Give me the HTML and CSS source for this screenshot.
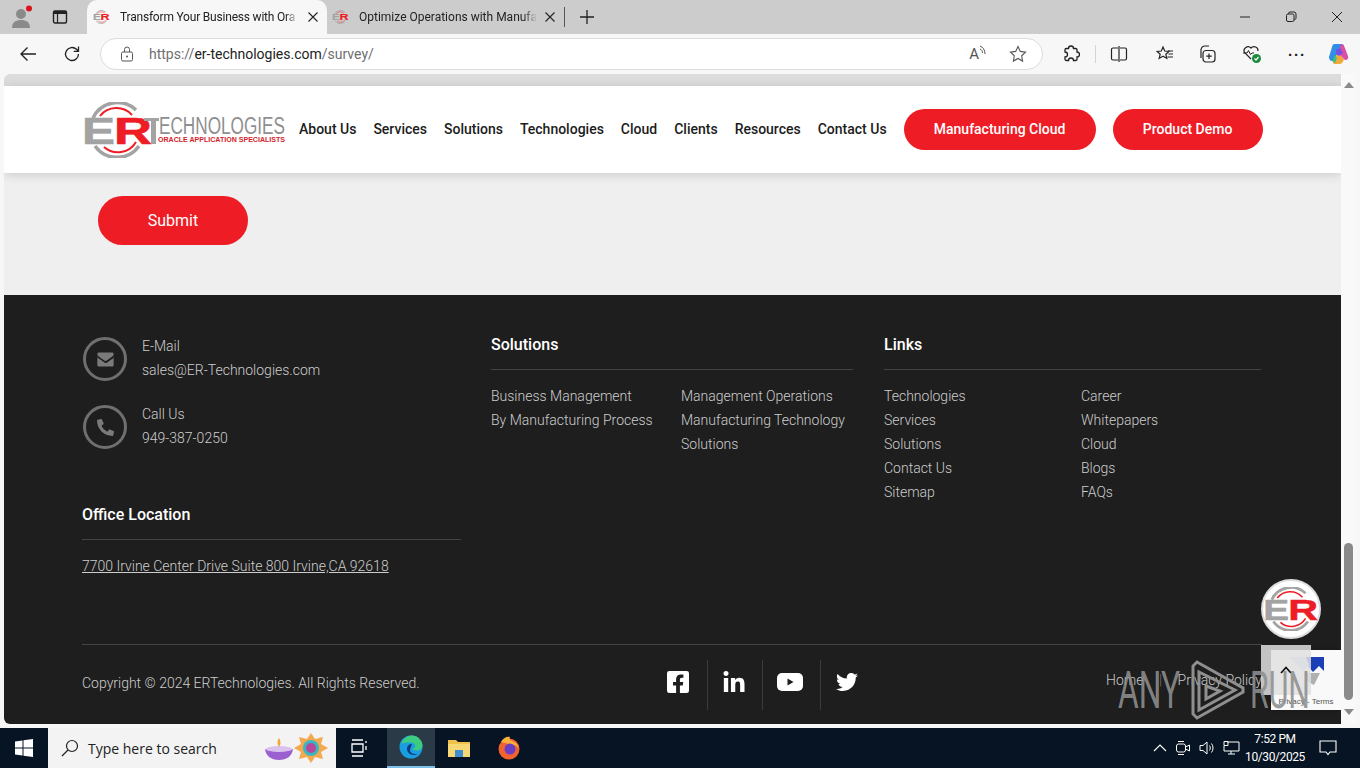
FILE: index.html

```html
<!DOCTYPE html>
<html lang="en">
<head>
    <meta charset="UTF-8">
    <meta name="viewport" content="width=device-width, initial-scale=1.0">
    <title>Survey - ER Technologies</title>
    <link rel="stylesheet" href="styles.css">
</head>
<body>
    <svg class="defs" width="0" height="0">
        <defs>
            <symbol id="emblem" viewBox="-2 0 76 56">
                <path d="M9 16A27 27 0 0 1 52 8" fill="none" stroke="#a3a3a3" stroke-width="3.5"/>
                <path d="M16 14A21 21 0 0 1 48 13" fill="none" stroke="#ee1c25" stroke-width="2"/>
                <path d="M11 44A27 27 0 0 0 55 44" fill="none" stroke="#a3a3a3" stroke-width="3.5"/>
                <path d="M20 45A21 21 0 0 0 52 40" fill="none" stroke="#ee1c25" stroke-width="2"/>
                <text class="emblem-e" x="-2" y="42" textLength="33" lengthAdjust="spacingAndGlyphs">E</text>
                <text class="emblem-r" x="30" y="42" textLength="38" lengthAdjust="spacingAndGlyphs">R</text>
            </symbol>
        </defs>
    </svg>

    <div class="tabstrip">
        <div class="profile">
            <svg width="24" height="24" viewBox="0 0 24 24"><circle cx="11" cy="9" r="5" fill="#8a8a8a"/><path d="M2 23c0-6 4-8 9-8s9 2 9 8z" fill="#8a8a8a"/><circle cx="19" cy="3.5" r="3" fill="#d9141e"/></svg>
        </div>
        <div class="strip-btn">
            <svg width="16" height="16" viewBox="0 0 16 16"><rect x="1.5" y="2" width="13" height="12" rx="1.5" fill="none" stroke="#222" stroke-width="1.4"/><rect x="1.5" y="2" width="13" height="3" fill="#222"/><path d="M5.5 5v9" stroke="#222" stroke-width="1.2"/></svg>
        </div>
        <div class="tab tab-active">
            <svg class="favicon" width="18" height="14"><use href="#emblem"/></svg>
            <span class="tab-title">Transform Your Business with Ora</span>
            <span class="tab-close"><svg width="10" height="10" viewBox="0 0 10 10"><path d="M.5.5l9 9M9.500.5l-9 9" stroke="#222" stroke-width="1.100"/></svg></span>
        </div>
        <div class="tab">
            <svg class="favicon" width="18" height="14"><use href="#emblem"/></svg>
            <span class="tab-title">Optimize Operations with Manufa</span>
            <span class="tab-close"><svg width="10" height="10" viewBox="0 0 10 10"><path d="M.5.5l9 9M9.500.5l-9 9" stroke="#222" stroke-width="1.100"/></svg></span>
        </div>
        <div class="tab-sep"></div>
        <div class="new-tab">
            <svg width="16" height="16" viewBox="0 0 16 16"><path d="M8 1v14M1 8h14" stroke="#222" stroke-width="1.3"/></svg>
        </div>
        <div class="window-btns">
            <svg width="12" height="12" viewBox="0 0 12 12"><path d="M1 6h10" stroke="#222" stroke-width="1"/></svg>
            <svg width="12" height="12" viewBox="0 0 12 12"><rect x="1.5" y="3" width="7.5" height="7.5" rx="1.5" fill="none" stroke="#222"/><path d="M3.5 3V2.5a1.5 1.5 0 0 1 1.5-1.5h4a2 2 0 0 1 2 2v4A1.5 1.5 0 0 1 9 8.500" fill="none" stroke="#222"/></svg>
            <svg width="12" height="12" viewBox="0 0 12 12"><path d="M1 1l10 10M11 1L1 11" stroke="#222" stroke-width="1"/></svg>
        </div>
    </div>

    <div class="toolbar">
        <svg class="nav-icon" width="18" height="18" viewBox="0 0 18 18"><path d="M17 9H2M8.500 2.500L2 9l6.500 6.500" fill="none" stroke="#222" stroke-width="1.4"/></svg>
        <svg class="nav-icon" width="18" height="18" viewBox="0 0 18 18"><path d="M15.500 9a6.500 6.500 0 1 1-2-4.700L15.500 6.300M15.500 1.500v4.800h-4.800" fill="none" stroke="#222" stroke-width="1.3"/></svg>
        <div class="address">
            <svg class="lock" width="14" height="16" viewBox="0 0 14 16"><rect x="1.500" y="6" width="11" height="9" rx="1.500" fill="none" stroke="#555"/><path d="M4.500 6V3.500a2.500 2.500 0 0 1 5 0V6" fill="none" stroke="#555"/><circle cx="7" cy="10.500" r="1" fill="#555"/></svg>
            <span class="url"><span class="url-dim">https://</span>er-technologies.com<span class="url-dim">/survey/</span></span>
            <span class="read-aloud">A<svg width="8" height="10" viewBox="0 0 8 10"><path d="M1 1c3 1 5 4 5 8M1 4c1.500.5 2.500 2 2.500 4" fill="none" stroke="#555"/></svg></span>
            <svg width="18" height="18" viewBox="0 0 18 18"><path d="M9 1.500l2.300 4.900 5.200.7-3.800 3.700.9 5.300L9 13.500l-4.600 2.600.9-5.300L1.500 7.100l5.200-.7z" fill="none" stroke="#555" stroke-width="1.100"/></svg>
        </div>
        <div class="tools">
            <svg class="tool" width="18" height="18" viewBox="0 0 18 18"><path d="M6.500 3.500a2.500 2.500 0 0 1 5 0h2.200c.7 0 1.300.6 1.300 1.300V7a2.500 2.500 0 0 1 0 5v2.200c0 .7-.6 1.300-1.300 1.300H11.500a2.500 2.500 0 0 0-5 0H4.300c-.7 0-1.300-.6-1.300-1.300V12a2.500 2.500 0 0 0 0-5V4.800c0-.7.6-1.300 1.300-1.300z" fill="none" stroke="#222" stroke-width="1.300"/></svg>
            <span class="tool-sep"></span>
            <svg class="tool" width="18" height="18" viewBox="0 0 18 18"><path d="M8 3H3a1.500 1.500 0 0 0-1.500 1.500v9A1.500 1.500 0 0 0 3 15h5M10 3h5a1.500 1.500 0 0 1 1.500 1.500v9A1.500 1.500 0 0 1 15 15h-5M9 1v16" fill="none" stroke="#222" stroke-width="1.200"/></svg>
            <svg class="tool tool-fav" width="18" height="18" viewBox="0 0 18 18"><path d="M7 2l1.700 4 4.300.4-3.200 2.800 1 4.200L7 11.200l-3.800 2.200 1-4.200L1 6.400 5.300 6zM12 6h5M12.500 9h4.500M11.500 12H17" fill="none" stroke="#222" stroke-width="1.200"/></svg>
            <svg class="tool" width="18" height="18" viewBox="0 0 18 18"><rect x="5" y="5.500" width="12" height="11.500" rx="3" fill="none" stroke="#222" stroke-width="1.200"/><path d="M11 8.500v5.500M8.300 11.200h5.400M3 13V5a4 4 0 0 1 4-4h4" fill="none" stroke="#222" stroke-width="1.200"/></svg>
            <svg class="tool tool-health" width="20" height="20" viewBox="0 0 20 20"><path d="M9 15L2.500 8.500a4 4 0 0 1 6.500-4.500 4 4 0 0 1 7 3" fill="none" stroke="#222" stroke-width="1.200"/><path d="M1 9h4l1.500-2.500 2 4L10 9h2" fill="none" stroke="#222"/><circle cx="14.500" cy="14.500" r="4.500" fill="#1a8a3c"/><path d="M12.500 14.500l1.500 1.500 2.500-3" fill="none" stroke="#fff" stroke-width="1.200"/></svg>
            <span class="more">&middot;&middot;&middot;</span>
            <svg class="tool" width="22" height="22" viewBox="0 0 22 22">
                <path d="M7 1h6c2 0 3 1 3 3l-6 6-5 8H4c-2 0-3-2-3-4l3-10c.5-2 1-3 3-3z" fill="#2f8fe6"/>
                <path d="M5 18l5-8 6 6c-1 3-2 5-5 5H7c-2 0-2-1-2-3z" fill="#f2a93b"/>
                <path d="M13 1c2 0 3 1 3.500 3l3.500 9c.5 2 0 4-3 4l-7-7z" fill="#d94fa8"/>
                <path d="M8 7l4-2 3 5-4 3-3-2z" fill="#7a4fe0"/>
                <path d="M4 18l3-6 2 3-2 5z" fill="#3fbf7f"/>
            </svg>
        </div>
    </div>

    <div class="viewport">
        <div class="page">
            <div class="page-top"></div>
            <header class="site-header">
                <a class="logo">
                    <svg width="203" height="56" viewBox="0 0 203 56">
                        <use href="#emblem" width="76" height="56"/>
                        <path d="M62 16h15v3h-3v23h-5V19H62z" fill="#a3a3a3"/>
                        <text class="logo-name" x="77" y="32" textLength="126" lengthAdjust="spacingAndGlyphs">ECHNOLOGIES</text>
                        <text class="logo-tag" x="76" y="40" textLength="127" lengthAdjust="spacingAndGlyphs">ORACLE APPLICATION SPECIALISTS</text>
                    </svg>
                </a>
                <nav class="main-nav">
                    <a>About Us</a>
                    <a>Services</a>
                    <a>Solutions</a>
                    <a>Technologies</a>
                    <a>Cloud</a>
                    <a>Clients</a>
                    <a>Resources</a>
                    <a>Contact Us</a>
                    <a class="btn-red btn-cloud">Manufacturing Cloud</a>
                    <a class="btn-red btn-demo">Product Demo</a>
                </nav>
            </header>

            <main class="survey">
                <button class="btn-submit">Submit</button>
            </main>

            <footer class="site-footer">
                <div class="footer-cols">
                    <div class="col-contact">
                        <div class="contact-item">
                            <span class="contact-icon">
                                <svg width="17" height="17" viewBox="0 0 512 512"><path fill="#7a7a7a" d="M502 191v227c0 26-21 46-47 46H57c-26 0-47-20-47-46V191c9 9 19 17 31 25 53 36 114 77 162 112 21 15 47 33 63 33s42-18 63-33c48-35 109-76 162-112 12-8 22-16 31-25zM455 48c26 0 47 21 47 47 0 28-20 53-40 68-63 44-126 87-176 123-12 9-22 17-30 17s-18-8-30-17c-50-36-113-79-176-123-20-15-40-40-40-68 0-26 21-47 47-47z"/></svg>
                            </span>
                            <div>E-Mail<br>sales@ER-Technologies.com</div>
                        </div>
                        <div class="contact-item">
                            <span class="contact-icon">
                                <svg width="17" height="17" viewBox="0 0 512 512"><path fill="#7a7a7a" d="M497.39 361.8l-112-48a24 24 0 0 0-28 6.9l-49.6 60.6A370.66 370.66 0 0 1 130.6 204.11l60.6-49.6a23.94 23.94 0 0 0 6.9-28l-48-112A24.16 24.16 0 0 0 122.6.61l-104 24A24 24 0 0 0 0 48c0 256.5 207.9 464 464 464a24 24 0 0 0 23.4-18.6l24-104a24.29 24.29 0 0 0-14.01-27.6z"/></svg>
                            </span>
                            <div>Call Us<br>949-387-0250</div>
                        </div>
                        <h4 class="footer-title office-title">Office Location</h4>
                        <a class="address-link">7700 Irvine Center Drive Suite 800 Irvine,CA 92618</a>
                    </div>

                    <div>
                        <h4 class="footer-title">Solutions</h4>
                        <div class="link-grid solutions-grid">
                            <ul>
                                <li>Business Management</li>
                                <li>By Manufacturing Process</li>
                            </ul>
                            <ul>
                                <li>Management Operations</li>
                                <li>Manufacturing Technology</li>
                                <li>Solutions</li>
                            </ul>
                        </div>
                    </div>

                    <div class="col-links">
                        <h4 class="footer-title">Links</h4>
                        <div class="link-grid links-grid">
                            <ul>
                                <li>Technologies</li>
                                <li>Services</li>
                                <li>Solutions</li>
                                <li>Contact Us</li>
                                <li>Sitemap</li>
                            </ul>
                            <ul>
                                <li>Career</li>
                                <li>Whitepapers</li>
                                <li>Cloud</li>
                                <li>Blogs</li>
                                <li>FAQs</li>
                            </ul>
                        </div>
                    </div>
                </div>

                <div class="footer-bottom">
                    <div class="copyright">Copyright &copy; 2024 ERTechnologies. All Rights Reserved.</div>
                    <div class="social">
                        <a><svg width="22" height="22" viewBox="0 32 448 448"><path fill="#fff" d="M400 32H48A48 48 0 0 0 0 80v352a48 48 0 0 0 48 48h137.25V327.69h-63V256h63v-54.64c0-62.15 37-96.48 93.67-96.48 27.14 0 55.52 4.84 55.52 4.84v61h-31.27c-30.81 0-40.42 19.12-40.42 38.73V256h68.78l-11 71.69h-57.78V480H400a48 48 0 0 0 48-48V80a48 48 0 0 0-48-48z"/></svg></a>
                        <a><svg width="22" height="21" viewBox="0 0 448 448"><path fill="#fff" d="M100.28 448H7.4V148.9h92.88zM53.79 108.1C24.09 108.1 0 83.5 0 53.8a53.79 53.79 0 0 1 107.58 0c0 29.7-24.1 54.3-53.79 54.3zM447.9 448h-92.68V302.4c0-34.7-.7-79.2-48.29-79.2-48.29 0-55.69 37.7-55.69 76.7V448h-92.78V148.9h89.08v40.8h1.3c12.4-23.5 42.69-48.3 87.88-48.3 94 0 111.28 61.9 111.28 142.3V448z"/></svg></a>
                        <a><svg width="26" height="18" viewBox="0 0 26 18"><rect width="26" height="18" rx="5" fill="#fff"/><path d="M10.500 5.500v7l6-3.500z" fill="#1e1e1e"/></svg></a>
                        <a><svg width="22" height="22" viewBox="0 0 512 512"><path fill="#fff" d="M459.37 151.716c.325 4.548.325 9.097.325 13.645 0 138.72-105.583 298.558-298.558 298.558-59.452 0-114.68-17.219-161.137-47.106 8.447.974 16.568 1.299 25.34 1.299 49.055 0 94.213-16.568 130.274-44.832-46.132-.975-84.792-31.188-98.112-72.772 6.498.974 12.995 1.624 19.818 1.624 9.421 0 18.843-1.3 27.614-3.573-48.081-9.747-84.143-51.98-84.143-102.985v-1.299c13.969 7.797 30.214 12.67 47.431 13.319-28.264-18.843-46.781-51.005-46.781-87.391 0-19.492 5.197-37.36 14.294-52.954 51.655 63.675 129.3 105.258 216.365 109.807-1.624-7.797-2.599-15.918-2.599-24.04 0-57.828 46.782-104.934 104.934-104.934 30.213 0 57.502 12.67 76.67 33.137 23.715-4.548 46.456-13.32 66.599-25.34-7.798 24.366-24.366 44.833-46.132 57.827 21.117-2.273 41.584-8.122 60.426-16.243-14.292 20.791-32.161 39.308-52.628 54.253z"/></svg></a>
                    </div>
                    <div class="legal"><span>Home</span><span class="legal-sep">|</span><span>Privacy Policy</span></div>
                </div>
            </footer>

            <!-- floating stuff over the footer -->
            <div class="chat-badge"><svg width="60" height="44"><use href="#emblem"/></svg></div>
            <div class="recaptcha">
                <svg width="36" height="36" viewBox="0 0 36 36"><path d="M18 2l10 0 0 0 8 0v14l-5-5-6 6-7-8z" fill="#1c3fb5"/><path d="M2 2h16l3 8-6 6L8 9z" fill="#c4d4f5"/><path d="M18 18h14l-6 12-8-4z" fill="#b0b0b0"/></svg>
                <span class="recaptcha-links">Privacy - Terms</span>
            </div>
            <div class="to-top">
                <svg width="12" height="8" viewBox="0 0 12 8"><path d="M1 7l5-5.500L11 7" fill="none" stroke="#111" stroke-width="1.800"/></svg>
            </div>
            <svg class="watermark" width="194" height="64" viewBox="0 0 194 64">
                <text x="0" y="50" textLength="62" lengthAdjust="spacingAndGlyphs">ANY</text>
                <path d="M75 8v48l4 4 46-26v-4L79 4zM81 14l36 18-36 20zM88 28l14 5-14 8z" fill="none" stroke="#8f8f8f" stroke-width="3"/>
                <text x="132" y="50" textLength="60" lengthAdjust="spacingAndGlyphs">RUN</text>
            </svg>
        </div>

        <div class="scrollbar">
            <span class="arrow-up"></span>
            <div class="scroll-track"><div class="scroll-thumb"></div></div>
            <span class="arrow-down"></span>
        </div>
    </div>

    <div class="taskbar">
        <div class="start">
            <svg width="18" height="18" viewBox="0 0 18 18"><path d="M0 2.500l7.500-1v7H0zM8.500 1.300L18 0v8.500H8.500zM0 9.500h7.500v7l-7.500-1zM8.500 9.500H18V18l-9.500-1.300z" fill="#fff"/></svg>
        </div>
        <div class="searchbox">
            <svg width="18" height="18" viewBox="0 0 18 18"><circle cx="11" cy="7" r="5.500" fill="none" stroke="#222" stroke-width="1.200"/><path d="M7 11l-6 6" stroke="#222" stroke-width="1.300"/></svg>
            <span class="search-text">Type here to search</span>
            <svg class="search-art" width="66" height="32" viewBox="0 0 66 32">
                <path d="M2 17c8 3 20 3 28 0-1 7-6 11-14 11S3 24 2 17z" fill="#9c5fd0"/>
                <ellipse cx="16" cy="17" rx="13" ry="3" fill="#d9c3ee"/>
                <path d="M16 6c2 3 2 6 0 9-2-3-2-6 0-9z" fill="#f3a33b"/>
                <polygon points="48,1 52,7 60,5 58,12 65,16 58,20 60,27 52,25 48,31 44,25 36,27 38,20 31,16 38,12 36,5 44,7" fill="#f4a94e"/>
                <circle cx="48" cy="16" r="8" fill="#37b7c4"/>
                <circle cx="48" cy="16" r="5" fill="#b6479c"/>
            </svg>
        </div>
        <div class="task-btn task-view">
            <svg width="18" height="18" viewBox="0 0 18 18"><path d="M1 1h11M1 17h11M1 5h11v8H1zM15 2v2M15 7v4" fill="none" stroke="#fff" stroke-width="1.300"/></svg>
        </div>
        <div class="task-btn task-edge">
            <svg width="24" height="24" viewBox="0 0 24 24">
                <circle cx="12" cy="12" r="11.500" fill="#1b9de2"/>
                <path d="M2 9C4 3 9 .5 13 .5c6 0 10.500 5 10.500 10 0 3-3 5-6 5-2 0-4-1-4-2 4 0 4-6-2-6-5 0-9 .5-9.500 1.500z" fill="#3ccb7f"/>
                <path d="M13 9c-3 0-5 2-5 5s3 6 7 6c2 0 3-.5 4-1-6 1-8-2-8-4 0-1 1-4 2-6z" fill="#0c3c7a"/>
            </svg>
        </div>
        <div class="task-btn task-files">
            <svg width="22" height="20" viewBox="0 0 22 20"><path d="M0 2h8l2 2h12v15H0z" fill="#f0c14b"/><rect y="6" width="22" height="13" fill="#f8d775"/><rect x="7" y="12" width="8" height="7" fill="#3f8fcf"/></svg>
        </div>
        <div class="task-btn task-firefox">
            <svg width="24" height="24" viewBox="0 0 24 24"><circle cx="12" cy="13" r="10.500" fill="#f2622e"/><path d="M4 6c2-4 6-6 9-5-1 2 0 3 2 4 3 1 6 3 7 8-1-2-3-4-6-4z" fill="#fbb03b"/><circle cx="13" cy="13" r="5.500" fill="#6a3fc4"/></svg>
        </div>
        <div class="tray">
            <svg width="14" height="8" viewBox="0 0 14 8"><path d="M1 7l6-6 6 6" fill="none" stroke="#fff" stroke-width="1.100"/></svg>
            <svg width="16" height="16" viewBox="0 0 16 16"><rect x="1.500" y="4" width="9" height="8" rx="2" fill="none" stroke="#fff"/><path d="M10.500 7l4-2v6l-4-2M3 1.500h6M3 14.500h6" fill="none" stroke="#fff"/></svg>
            <svg width="16" height="16" viewBox="0 0 16 16"><path d="M1 5.500h3L8 2v12l-4-3.500H1zM10.500 5.500c1 1.500 1 3.500 0 5M12.500 3.500c2 2.500 2 6.500 0 9" fill="none" stroke="#fff"/></svg>
            <svg width="17" height="16" viewBox="0 0 17 16"><path d="M4 2h12v9H1V6M8 11v3M5 14h7M1 1.500h4v4H1z" fill="none" stroke="#fff"/></svg>
            <div class="clock">7:52 PM<br>10/30/2025</div>
            <svg class="notify" width="18" height="16" viewBox="0 0 18 16"><path d="M1 1h16v11h-6l-2 2.500L7 12H1z" fill="none" stroke="#fff" stroke-width="1.100"/></svg>
        </div>
    </div>
</body>
</html>
```

FILE: styles.css

```css
* { box-sizing: border-box; }
html, body { margin: 0; height: 100%; }
body { width: 1360px; height: 768px; overflow: hidden; display: flex; flex-direction: column; font-family: Roboto, "Liberation Sans", sans-serif; background: #f7f7f7; }
a { color: inherit; text-decoration: none; }
ul { list-style: none; margin: 0; padding: 0; }
.defs { position: absolute; }
.emblem-e { font: 700 37px "Liberation Sans", sans-serif; fill: #a3a3a3; stroke: #a3a3a3; stroke-width: .6; }
.emblem-r { font: 700 37px "Liberation Sans", sans-serif; fill: #ee1c25; stroke: #ee1c25; stroke-width: .6; }

/* browser chrome */
.tabstrip { height: 34px; flex: none; background: #cccccc; display: flex; align-items: center; font-family: Roboto, "Noto Sans", sans-serif; font-size: 12px; color: #222; }
.profile { width: 44px; padding-left: 10px; display: flex; }
.strip-btn { width: 43px; padding-left: 8px; display: flex; }
.tab { width: 240px; height: 34px; display: flex; align-items: center; padding-left: 6px; }
.tab-active { background: #f7f7f7; border-radius: 10px 10px 0 0; }
.tab-active .tab-title { letter-spacing: -.2px; }
.tab + .tab { width: 238px; padding-left: 5px; }
.favicon { flex: none; margin-right: 9px; }
.tab-title { flex: 1; white-space: nowrap; overflow: hidden; mask-image: linear-gradient(to left, transparent 0, #000 14px); }
.tab-close { width: 28px; display: flex; justify-content: center; flex: none; }
.tab + .tab .tab-close { padding-right: 2px; }
.tab-sep { width: 1px; height: 20px; background: #555; margin: 0 14px 0 -1px; }
.new-tab { display: flex; }
.window-btns { margin-left: auto; display: flex; gap: 34px; padding-right: 17px; }

.toolbar { height: 40px; flex: none; background: #f7f7f7; display: flex; align-items: center; padding-left: 19px; }
.nav-icon { margin-right: 26px; flex: none; }
.nav-icon + .nav-icon { margin-right: 19px; }
.address { width: 943px; height: 32px; background: #fff; border: 1px solid #dcdcdc; border-radius: 16px; display: flex; align-items: center; padding: 0 15px 0 19px; flex: none; }
.lock { flex: none; margin-right: 15px; }
.url { flex: 1; font: 14px Roboto, "Noto Sans", sans-serif; color: #222; }
.url-dim { color: #6f6f6f; }
.read-aloud { font: 15px Roboto, sans-serif; color: #555; margin-right: 22px; display: flex; }
.tools { display: flex; align-items: center; padding-left: 19px; }
.tool { flex: none; margin-right: 26px; }
.tool-fav { margin-left: 2px; margin-right: 24px; }
.tool-health { margin-right: 28px; }
.tool-sep { width: 1px; height: 18px; background: #d4d4d4; margin: 0 14px 0 -11px; }
.more { font: 700 15px "Liberation Sans", sans-serif; letter-spacing: 1px; color: #222; margin-right: 22px; margin-left: -2px; }

.viewport { flex: 1; min-height: 0; display: flex; padding: 0 4px 4px; }
.page { position: relative; width: 1337px; overflow: hidden; display: flex; flex-direction: column; border-radius: 6px 0 0 6px; }
.page-top { height: 12px; flex: none; background: #dcdcdc; }

/* site header */
.site-header { position: relative; height: 87px; flex: none; background: #fff; box-shadow: 0 2px 10px rgba(0,0,0,.15); display: flex; align-items: center; padding-left: 78px; }
.logo { display: flex; margin-right: 14px; }
.logo-name { font: 400 23px "Liberation Sans", sans-serif; fill: #8f8f8f; }
.logo-tag { font: 700 8px "Liberation Sans", sans-serif; fill: #d3222a; }
.main-nav { display: flex; align-items: center; gap: 17px; font-size: 14px; font-weight: 500; color: #1c1c1c; }
.main-nav a { padding-bottom: 2px; }
.btn-red { background: #ee1c25; color: #fff; height: 41px; border-radius: 21px; display: flex; align-items: center; justify-content: center; }
.btn-cloud { width: 192px; }
.btn-demo { width: 150px; }

.survey { height: 122px; flex: none; background: #efefef; padding: 23px 0 0 94px; }
.btn-submit { width: 150px; height: 49px; border: none; border-radius: 25px; background: #ee1c25; color: #fff; font: 400 16px Roboto, sans-serif; }

/* footer */
.site-footer { flex: 1; background: #1e1e1e; color: #cdcdcd; font-size: 14px; font-weight: 300; line-height: 24px; padding: 39px 79px 0 78px; }
.footer-cols { display: grid; grid-template-columns: 379px 362px 378px; column-gap: 30px; height: 310px; }
.col-links { margin-left: 1px; }
.footer-title { margin: -1px 0 14px; padding-bottom: 12px; border-bottom: 1px solid #444; color: #fff; font-size: 16px; font-weight: 500; line-height: 24px; }
.contact-item { display: flex; gap: 15px; margin-bottom: 20px; }
.contact-icon { width: 44px; height: 44px; margin: 3px 0 0 1px; border: 3px solid #6f6f6f; border-radius: 50%; display: flex; align-items: center; justify-content: center; flex: none; }
.office-title { margin-top: 53px; }
.address-link { text-decoration: underline; }
.link-grid { display: grid; }
.solutions-grid { grid-template-columns: 190px 1fr; }
.links-grid { grid-template-columns: 197px 1fr; }
.footer-bottom { border-top: 1px solid #444; display: flex; align-items: center; height: 80px; position: relative; }
.copyright { width: 571px; flex: none; margin-bottom: 4px; }
.social { display: flex; height: 50px; align-items: center; }
.social a { display: flex; align-items: center; justify-content: center; height: 50px; width: 58px; padding: 0 3px 6px 0; border-left: 1px solid #3c3c3c; }
.social a:first-child { border-left: none; width: 54px; padding-right: 4px; }
.social a:nth-child(2) { width: 55px; }
.social a:last-child { width: 54px; padding-right: 2px; }
.legal { width: 156px; margin-left: auto; color: #c8c8c8; margin-bottom: 10px; display: flex; justify-content: space-between; }
.legal-sep { color: #777; }

/* floating stuff */
.chat-badge { position: absolute; left: 1257px; top: 505px; width: 60px; height: 60px; border-radius: 50%; background: #fff; border: 2px solid #ddd; display: flex; align-items: center; justify-content: center; }
.chat-badge svg { flex: none; margin-left: 4px; }
.recaptcha { position: absolute; left: 1267px; top: 576px; width: 70px; height: 60px; background: #f9f9f9; box-shadow: 0 0 4px rgba(0,0,0,.3); display: flex; flex-direction: column; align-items: center; padding-top: 5px; }
.recaptcha-links { font: 8px "Liberation Sans", sans-serif; color: #555; white-space: nowrap; margin-top: 6px; }
.to-top { position: absolute; left: 1257px; top: 571px; width: 50px; height: 50px; background: rgba(225,225,225,.85); display: flex; align-items: center; justify-content: center; }
.watermark { position: absolute; left: 1114px; top: 584px; }
.watermark text { font: 400 52px Roboto, sans-serif; fill: #8f8f8f; fill-opacity: .9; }

.scrollbar { width: 15px; flex: none; background: #f9f9f9; display: flex; flex-direction: column; align-items: center; padding: 8px 0 9px; }
.arrow-up { border: 5px solid transparent; border-top: none; border-bottom: 6px solid #8a8a8a; }
.arrow-down { border: 5px solid transparent; border-bottom: none; border-top: 6px solid #8a8a8a; }
.scroll-track { flex: 1; width: 100%; display: flex; flex-direction: column; justify-content: flex-end; align-items: center; padding-bottom: 9px; }
.scroll-thumb { width: 9px; height: 157px; background: #8a8a8a; border-radius: 5px; }

/* taskbar */
.taskbar { height: 40px; flex: none; background: #061423; display: flex; align-items: center; color: #fff; font-family: "Open Sans", "Noto Sans", sans-serif; }
.start { width: 48px; display: flex; justify-content: center; }
.searchbox { width: 288px; height: 40px; background: #f3f3f3; color: #222; display: flex; align-items: center; padding-left: 13px; font-size: 14px; }
.search-text { margin-left: 9px; flex: 1; }
.search-art { margin-right: 7px; }
.task-btn { width: 48px; height: 40px; display: flex; align-items: center; justify-content: center; }
.task-view { margin-right: 3px; }
.task-edge { background: #2a3b47; border-bottom: 2px solid #7cc0e8; }
.task-firefox { margin-left: 2px; }
.tray { margin-left: auto; display: flex; align-items: center; gap: 8px; font-family: Roboto, sans-serif; font-size: 12px; }
.clock { text-align: center; line-height: 18px; letter-spacing: -.4px; width: 66px; margin-left: -6px; }
.notify { margin: 0 23px 0 3px; }
```
